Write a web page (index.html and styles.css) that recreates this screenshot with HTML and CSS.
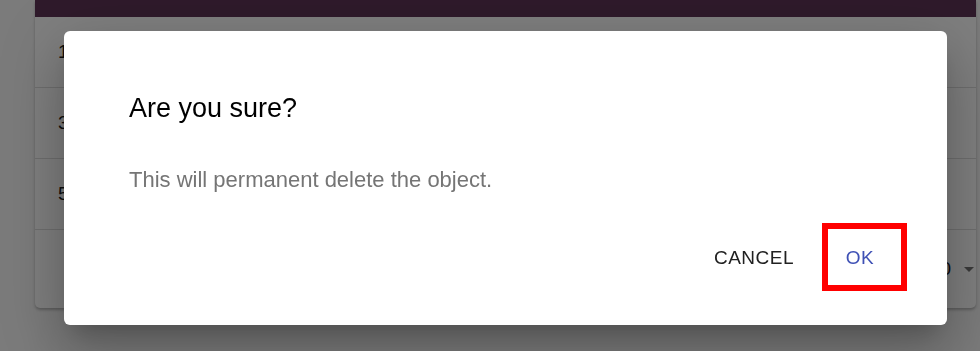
FILE: index.html
```html
<!DOCTYPE html>
<html>
<head>
<meta charset="utf-8">
<link rel="stylesheet" href="styles.css">
</head>
<body>
<div class="page">
  <div class="card">
    <div class="card-head"></div>
    <div class="row"><span class="cell">1</span></div>
    <div class="row"><span class="cell">3</span></div>
    <div class="row"><span class="cell">5</span></div>
    <div class="footer">
      <span class="select">10<span class="caret"></span></span>
    </div>
  </div>
</div>
<div class="backdrop"></div>
<div class="dialog" role="dialog">
  <h2 class="dialog-title">Are you sure?</h2>
  <p class="dialog-text">This will permanent delete the object.</p>
  <div class="dialog-actions">
    <button class="btn btn-cancel">CANCEL</button>
    <button class="btn btn-ok">OK</button>
  </div>
  <div class="highlight"></div>
</div>
</body>
</html>
```

FILE: styles.css
```css
html, body {
  margin: 0;
  padding: 0;
  height: 100%;
  overflow: hidden;
}
body {
  background: #f7f7f7;
  font-family: "Liberation Sans", Arial, sans-serif;
}
.page {
  padding-left: 35px;
}
.card {
  width: 941px;
  background: #fff;
  box-shadow: 0 2px 3px rgba(0,0,0,0.25);
  border-radius: 0 0 5px 5px;
}
.card-head {
  height: 17px;
  background: #5f3557;
}
.row {
  height: 70px;
  border-bottom: 1px solid #dcdcdc;
  display: flex;
  align-items: center;
}
.cell {
  padding-left: 23px;
  font-size: 19px;
  color: #1a1a1a;
}
.footer {
  height: 78px;
  display: flex;
  align-items: center;
  justify-content: flex-end;
}
.select {
  display: flex;
  align-items: center;
  font-size: 19px;
  color: #1a1a2a;
  margin-right: 2px;
}
.caret {
  width: 0;
  height: 0;
  margin-left: 13px;
  border-left: 5px solid transparent;
  border-right: 5px solid transparent;
  border-top: 5px solid #757575;
}
.backdrop {
  position: fixed;
  inset: 0;
  background: rgba(0,0,0,0.5);
}
.dialog {
  position: absolute;
  left: 64px;
  top: 31px;
  width: 883px;
  height: 294px;
  box-sizing: border-box;
  background: #fff;
  border-radius: 6px;
  box-shadow: 0 15px 21px -10px rgba(0,0,0,0.2), 0 33px 52px 4px rgba(0,0,0,0.14), 0 12px 63px 11px rgba(0,0,0,0.12);
  display: flex;
  flex-direction: column;
  padding: 64px 0 0 65px;
}
.dialog-title {
  margin: 0;
  font-size: 27px;
  line-height: 27px;
  font-weight: 400;
  color: #000;
}
.dialog-text {
  margin: 47px 0 0;
  font-size: 22px;
  line-height: 22px;
  color: #757575;
}
.dialog-actions {
  margin-top: 46px;
  display: flex;
  justify-content: flex-end;
  padding-right: 43px;
  gap: 11px;
}
.btn {
  font-family: "Liberation Sans", Arial, sans-serif;
  font-size: 19px;
  line-height: 19px;
  letter-spacing: 0.5px;
  background: transparent;
  border: 0;
  padding: 11px 11px;
  min-width: 88px;
  cursor: pointer;
}
.btn-cancel {
  color: #212121;
}
.btn-ok {
  color: #3f51b5;
}
.highlight {
  position: absolute;
  left: 758px;
  top: 192px;
  width: 85px;
  height: 68px;
  box-sizing: border-box;
  border: 6px solid #ff0000;
}
```
